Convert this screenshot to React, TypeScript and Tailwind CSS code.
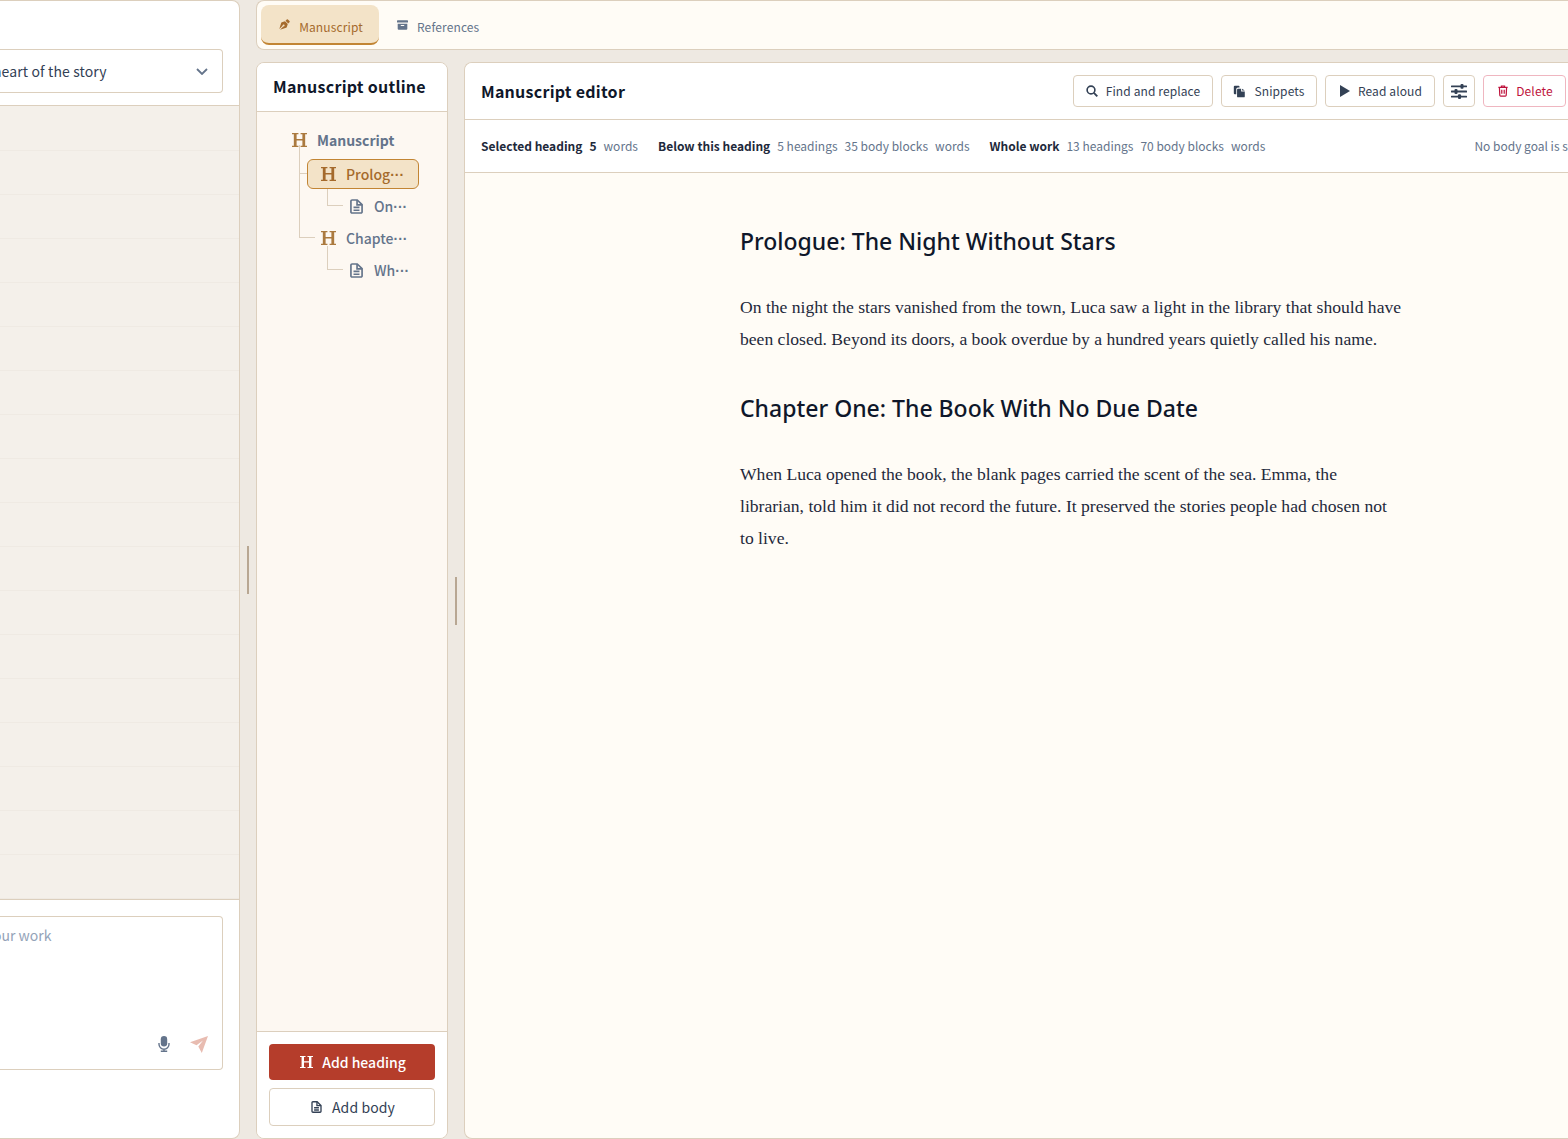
const sans = "font-['Noto_Sans_CJK_SC','Noto_Sans',sans-serif]";

const HeadingIcon = ({ className }: { className?: string }) => (
  <svg viewBox="1 1.5 14 13" preserveAspectRatio="none" className={className} fill="currentColor" aria-hidden>
    <path d="M1 1.5h6v1.200H5.300v4.400h5.400V2.700H9V1.500h6v1.200h-1.700v10.600H15v1.200H9v-1.200h1.700V8.500H5.300v4.800H7v1.200H1v-1.200h1.700V2.700H1z" />
  </svg>
);

const DocIcon = ({ className }: { className?: string }) => (
  <svg viewBox="0 0 14 16" className={className} fill="none" stroke="currentColor" strokeWidth="1.800" aria-hidden>
    <path d="M1 2.200A1.200 1.200 0 0 1 2.200 1h5.600L13 6v7.800a1.200 1.200 0 0 1-1.200 1.200H2.200A1.200 1.200 0 0 1 1 13.800z" />
    <path d="M7.600 1v5.200H13M3.800 9h6.400M3.800 12h6.400" />
  </svg>
);

const PenIcon = ({ className }: { className?: string }) => (
  <svg viewBox="0 0 16 16" className={className} fill="currentColor" aria-hidden>
    <path d="M11.300.8 9.500 2.600l3.900 3.900 1.800-1.800a1.200 1.200 0 0 0 0-1.700L13 .8a1.200 1.200 0 0 0-1.700 0z" />
    <path d="M8.700 3.200 4.200 4.600a1.600 1.600 0 0 0-1.100 1.100L.5 14.500l4.700-4.700a1.500 1.500 0 1 1 1 1L1.500 15.500l8.800-2.600a1.600 1.600 0 0 0 1.100-1.100l1.400-4.600z" />
  </svg>
);

const BoxIcon = ({ className }: { className?: string }) => (
  <svg viewBox="0 0 16 14" className={className} fill="currentColor" aria-hidden>
    <path d="M1 0h14a1 1 0 0 1 1 1v2.500H0V1a1 1 0 0 1 1-1zM1 5h14v7.500a1.500 1.500 0 0 1-1.500 1.500h-11A1.500 1.500 0 0 1 1 12.500zm4.500 2v1.400h5V7z" />
  </svg>
);

const CopyIcon = ({ className }: { className?: string }) => (
  <svg viewBox="0 0 16 16" className={className} fill="currentColor" aria-hidden>
    <path d="M1 2.200A1.200 1.200 0 0 1 2.200 1H7a1 1 0 0 1 1 1v1H6A2 2 0 0 0 4 5v6.500H2.200A1.200 1.200 0 0 1 1 10.300z" />
    <path d="M6.200 4.500H10V8h4.500v6a1.200 1.200 0 0 1-1.200 1.200H6.200A1.200 1.200 0 0 1 5 14V5.700a1.200 1.200 0 0 1 1.200-1.200zM11.200 4.500l3.300 2.300h-3.300z" />
  </svg>
);

const TrashIcon = ({ className }: { className?: string }) => (
  <svg viewBox="0 0 14 16" className={className} fill="none" stroke="currentColor" strokeWidth="1.700" aria-hidden>
    <path d="M.5 3h13M4.800 3V1h4.400v2M2 3l.5 11a1.200 1.200 0 0 0 1.200 1.100h6.600a1.200 1.200 0 0 0 1.200-1.100L12 3M5.300 6.200v5.800M8.700 6.200v5.800" />
  </svg>
);

const SlidersIcon = ({ className }: { className?: string }) => (
  <svg viewBox="0 0 16 15" className={className} fill="currentColor" aria-hidden>
    <rect x="0" y="1.500" width="16" height="1.800" rx=".5" />
    <rect x="0" y="6.600" width="16" height="1.800" rx=".5" />
    <rect x="0" y="11.700" width="16" height="1.800" rx=".5" />
    <rect x="9.500" y="0" width="3" height="4.800" rx="1" />
    <rect x="3.500" y="5.100" width="3" height="4.800" rx="1" />
    <rect x="7" y="10.200" width="3" height="4.800" rx="1" />
  </svg>
);

const SearchIcon = ({ className }: { className?: string }) => (
  <svg viewBox="0 0 12 12" className={className} fill="none" stroke="currentColor" strokeWidth="1.600" aria-hidden>
    <circle cx="5" cy="5" r="3.900" />
    <path d="M7.900 7.900 11.300 11.300" strokeWidth="1.900" />
  </svg>
);

const MicIcon = ({ className }: { className?: string }) => (
  <svg viewBox="0 0 12 16" className={className} aria-hidden>
    <rect x="2.800" y="0" width="6.400" height="10.500" rx="3.200" fill="currentColor" />
    <path d="M1 7v1.200a5 5 0 0 0 10 0V7M6 13v2M2.800 15.200h6.400" fill="none" stroke="currentColor" strokeWidth="1.400" />
  </svg>
);

const SendIcon = ({ className }: { className?: string }) => (
  <svg viewBox="0 0 18 17" className={className} fill="currentColor" aria-hidden>
    <path d="M18 0 0 6.300l6.500 2.900L13 4.500 8.300 10.400l3.500 6.600z" />
  </svg>
);

const Toolbtn = ({ label, icon, className }: { label?: string; icon: React.ReactNode; className: string }) => (
  <button className={`flex h-8 items-center justify-center gap-2 rounded border border-[#dccfbd] bg-white text-xs tracking-[0.11px] text-[#334155] ${className}`}>
    {icon}
    {label}
  </button>
);

const Stat = ({ children }: { children: React.ReactNode }) => <span className="text-[#64748b]">{children}</span>;

// truncated outline label, the dots sit at mid height
const Clipped = ({ text }: { text: string }) => (
  <span>
    {text}
    <span className="font-['Liberation_Sans',sans-serif] font-bold">···</span>
  </span>
);

const App = () => {
  return (
    <div className={`flex h-[1139px] w-[1568px] overflow-hidden bg-[#eee9e2] ${sans}`}>
      {/* chat column, cut off on the left */}
      <aside className="flex h-full w-[240px] shrink-0 flex-col overflow-hidden rounded-r-lg border border-l-0 border-[#dccfbd] bg-white">
        <div className="h-[105px] shrink-0 border-b border-[#dccfbd] pt-[48px] pr-4">
          <div className="flex h-[44px] items-center justify-between overflow-hidden rounded-r border border-l-0 border-[#dccfbd] pr-[14px] text-sm tracking-[0.12px] text-[#334155]">
            <span className="-ml-[7px] whitespace-nowrap">heart of the story</span>
            <svg viewBox="0 0 12 7" className="h-[7px] w-3 text-[#64748b]" fill="none" stroke="currentColor" strokeWidth="1.800" aria-hidden>
              <path d="m1 1 5 5 5-5" />
            </svg>
          </div>
        </div>
        <div className="flex-1 bg-[#f4f0ea] pt-px">
          {Array.from({ length: 18 }).map((_, i) => (
            <div key={i} className="h-[44px] border-b border-[#efeae3]" />
          ))}
        </div>
        <div className="h-[239px] shrink-0 border-t border-[#dccfbd] pt-4 pr-4">
          <div className="relative h-[154px] rounded-r border border-l-0 border-[#dccfbd] pt-[8px] text-sm text-[#94a3b8]">
            <span className="-ml-[7px] block">our work</span>
            <MicIcon className="absolute right-[52px] bottom-[17px] h-4 w-3 text-[#64748b]" />
            <SendIcon className="absolute right-[14px] bottom-[16px] h-[17px] w-[18px] text-[#e8bcb1]" />
          </div>
        </div>
      </aside>

      {/* resize handle */}
      <div className="flex w-[16px] shrink-0 items-center justify-center">
        <div className="h-[48px] w-[2px] bg-[#b8a793]" />
      </div>

      <main className="flex min-w-0 flex-1 flex-col">
        <nav className="flex h-[50px] shrink-0 items-center gap-[1px] rounded-l-lg border border-r-0 border-[#dccfbd] bg-[#fffcf6] pl-1 text-xs tracking-[0.12px]">
          <div className="flex h-[40px] w-[118px] items-center justify-center gap-[9px] rounded-lg border-b-2 border-[#c28534] bg-[#f3e3c8] pl-[2px] text-[#a56a2c]">
            <PenIcon className="h-[11px] w-[11px]" />
            <span className="mt-[6px]">Manuscript</span>
          </div>
          <div className="flex h-[40px] items-center gap-[9px] pl-[17px] text-[#64748b]">
            <BoxIcon className="h-[10px] w-[11px]" />
            <span className="mt-[4px]">References</span>
          </div>
        </nav>

        <div className="mt-3 flex min-h-0 flex-1">
          {/* outline */}
          <section className="flex w-[192px] shrink-0 flex-col overflow-hidden rounded-lg border border-[#dccfbd] bg-[#fdf8f2]">
            <h2 className="h-[49px] shrink-0 border-b border-[#dccfbd] bg-white pt-[11px] pl-4 text-base font-bold tracking-[0.25px] text-[#0f172a]">Manuscript outline</h2>
            <div className="relative flex-1 pt-[13px] text-sm font-medium text-[#64748b]">
              <div className="absolute top-[33px] left-[42px] h-[92px] w-[1px] bg-[#dccfbd]" />
              <div className="absolute top-[61px] left-[42px] h-[1px] w-2 bg-[#dccfbd]" />
              <div className="absolute top-[125px] left-[42px] h-[1px] w-4 bg-[#dccfbd]" />
              <div className="absolute top-[77px] left-[70px] h-[17px] w-[16px] border-b border-l border-[#dccfbd]" />
              <div className="absolute top-[134px] left-[70px] h-[24px] w-[16px] border-b border-l border-[#dccfbd]" />

              <div className="relative flex h-[30px] items-center gap-[10px] pl-[35px] font-semibold">
                <HeadingIcon className="h-[14px] w-[15px] text-[#ab7a3f]" />
                Manuscript
              </div>
              <div className="relative mt-1 ml-[50px] flex h-[30px] w-[112px] items-center gap-[10px] rounded-md border border-[#c28534] bg-[#f3e3c8] pl-[13px] text-[#a56a2c]">
                <HeadingIcon className="h-[14px] w-[15px]" />
                <Clipped text="Prolog" />
              </div>
              <div className="relative mt-[2px] flex h-[30px] items-center gap-[11px] pl-[93px]">
                <DocIcon className="h-[15px] w-[13px]" />
                <Clipped text="On" />
              </div>
              <div className="relative mt-[2px] flex h-[30px] items-center gap-[10px] pl-[64px]">
                <HeadingIcon className="h-[14px] w-[15px] text-[#ab7a3f]" />
                <Clipped text="Chapte" />
              </div>
              <div className="relative mt-[2px] flex h-[30px] items-center gap-[11px] pl-[93px]">
                <DocIcon className="h-[15px] w-[13px]" />
                <Clipped text="Wh" />
              </div>
            </div>
            <div className="flex h-[107px] shrink-0 flex-col gap-2 border-t border-[#dccfbd] bg-white px-3 pt-3">
              <button className="flex h-9 items-center justify-center gap-[9px] rounded bg-[#b53d2b] pl-[2px] text-sm font-medium text-white">
                <HeadingIcon className="h-3 w-[13px]" />
                Add heading
              </button>
              <button className="flex h-[38px] items-center justify-center gap-[10px] rounded border border-[#dccfbd] pl-[2px] text-sm tracking-[0.12px] text-[#334155]">
                <DocIcon className="h-3 w-[11px]" />
                Add body
              </button>
            </div>
          </section>

          {/* resize handle */}
          <div className="flex w-[16px] shrink-0 items-center justify-center">
            <div className="mt-[1px] h-[48px] w-[2px] bg-[#b8a793]" />
          </div>

          {/* editor */}
          <section className="flex min-w-0 flex-1 flex-col overflow-hidden rounded-l-lg border border-r-0 border-[#dccfbd] bg-[#fffcf6]">
            <header className="flex h-[57px] shrink-0 items-center justify-between border-b border-[#dccfbd] bg-white pr-[2px] pl-4">
              <h1 className="text-base font-bold tracking-[0.25px] text-[#0f172a]">Manuscript editor</h1>
              <div className="flex items-center gap-2">
                <Toolbtn label="Find and replace" icon={<SearchIcon className="h-3 w-3" />} className="w-[140px]" />
                <Toolbtn label="Snippets" icon={<CopyIcon className="h-[13px] w-[13px]" />} className="w-[96px]" />
                <Toolbtn label="Read aloud" icon={<svg viewBox="0 0 10 12" className="h-3 w-[10px]" fill="currentColor"><path d="M0 0l10 6-10 6z" /></svg>} className="w-[110px] pl-[2px]" />
                <Toolbtn icon={<SlidersIcon className="h-[15px] w-4" />} className="w-8" />
                <button className="flex h-8 w-[83px] items-center justify-center gap-2 rounded border border-[#efb6c0] bg-white pl-[2px] text-xs tracking-[0.12px] text-[#be123c]">
                  <TrashIcon className="h-3 w-[10px]" />
                  Delete
                </button>
              </div>
            </header>
            <div className="flex h-[53px] shrink-0 items-center gap-5 overflow-hidden border-b border-[#dccfbd] bg-white pl-4 text-xs whitespace-nowrap">
              <div className="flex gap-[7px]">
                <b className="font-semibold text-[#1e293b]">Selected heading</b>
                <b className="font-semibold text-[#1e293b]">5</b>
                <Stat>words</Stat>
              </div>
              <div className="flex gap-[7px]">
                <b className="font-semibold text-[#1e293b]">Below this heading</b>
                <Stat>5 headings</Stat>
                <Stat>35 body blocks</Stat>
                <Stat>words</Stat>
              </div>
              <div className="flex gap-[7px]">
                <b className="font-semibold text-[#1e293b]">Whole work</b>
                <Stat>13 headings</Stat>
                <Stat>70 body blocks</Stat>
                <Stat>words</Stat>
              </div>
              <div className="ml-[189px]">
                <Stat>No body goal is set</Stat>
              </div>
            </div>
            <article className="mt-[48px] ml-[275px] w-[668px]">
              <h2 className="font-['Noto_Sans',sans-serif] text-[23px] leading-[40px] font-medium text-[#0f172a]">Prologue: The Night Without Stars</h2>
              <p className="mt-[30px] font-['Liberation_Serif',serif] text-[17.6px] leading-[32px] text-[#1e293b]">
                On the night the stars vanished from the town, Luca saw a light in the library that should have been closed. Beyond its doors, a book overdue by a hundred years quietly called his name.
              </p>
              <h2 className="mt-[33px] font-['Noto_Sans',sans-serif] text-[23px] leading-[40px] font-medium text-[#0f172a]">Chapter One: The Book With No Due Date</h2>
              <p className="mt-[30px] font-['Liberation_Serif',serif] text-[17.6px] leading-[32px] text-[#1e293b]">
                When Luca opened the book, the blank pages carried the scent of the sea. Emma, the<br />librarian, told him it did not record the future. It preserved the stories people had chosen not<br />to live.
              </p>
            </article>
          </section>
        </div>
      </main>
    </div>
  );
};

export default App;
